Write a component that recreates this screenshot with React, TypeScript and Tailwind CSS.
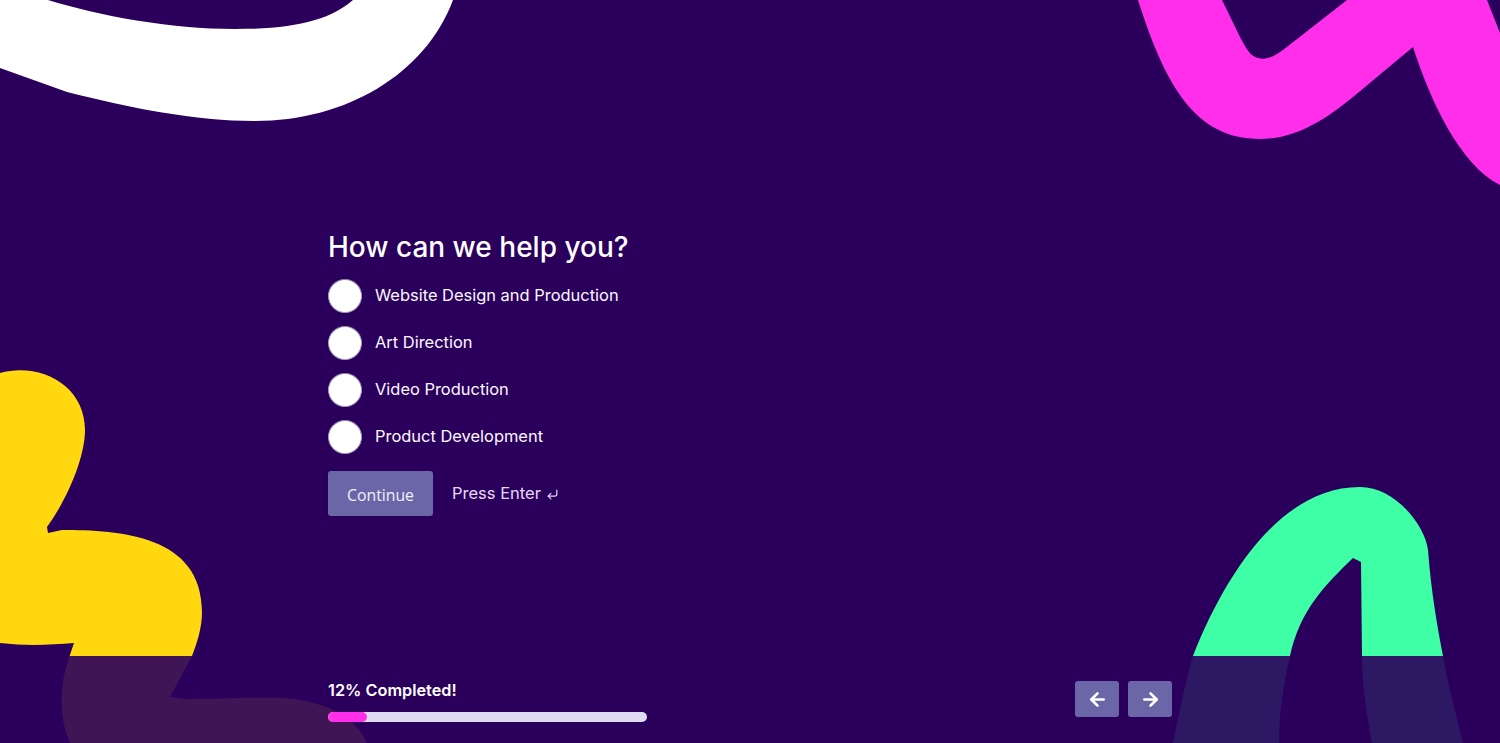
import { ArrowLeft, ArrowRight, CornerDownLeft } from "lucide-react";

const options = [
  "Website Design and Production",
  "Art Direction",
  "Video Production",
  "Product Development",
];

function Blobs() {
  return (
    <svg className="absolute inset-0" width="1500" height="743" viewBox="0 0 1500 743" fill="none">
      <path
        d="M0 68 L67 92 C130 108 195 121 255 121 C345 121 425 75 453 0 L353 0 C330 20 295 29 235 29 C170 29 100 16 48 0 L0 0 Z"
        fill="#ffffff"
      />
      <path
        d="M1138 0 C1165 85 1195 139 1260 139 C1295 139 1325 120 1353 97 L1413 47 C1430 100 1460 165 1500 185 L1500 33 L1487 0 L1347 0 L1283 50 C1272 58 1265 60 1258 58 C1250 56 1246 48 1240 37 L1222 0 Z"
        fill="#ff2eea"
      />
      <path
        d="M0 373 C40 362 85 385 85 430 C85 455 70 495 47 527 L48 533 L62 530 C120 530 202 535 202 612 C202 628 197 643 192 656 L170 697 L187 699 C220 699 255 697 283 698 C320 700 355 715 367 743 L70 743 C62 725 60 705 63 682 C65 668 70 655 74 643 C50 645 25 646 0 643 Z"
        fill="#ffd810"
      />
      <path
        d="M1173 743 C1180 710 1186 680 1193 656 C1215 600 1270 487 1360 487 C1395 487 1425 525 1428 550 C1431 590 1437 625 1443 656 C1448 685 1456 715 1463 743 L1372 743 C1367 715 1362 685 1362 656 L1361 562 L1353 558 C1325 585 1300 610 1290 656 C1283 685 1279 715 1279 743 Z"
        fill="#3effa5"
      />
    </svg>
  );
}

export default function App() {
  return (
    <div
      className="relative flex h-[743px] w-full flex-col overflow-hidden bg-[#2b005c] text-white"
      style={{ fontFamily: "Inter, sans-serif" }}
    >
      <Blobs />

      <main className="relative flex-1 pl-[328px] pt-[228px]">
        <h1 className="text-[28px] leading-[38px] font-medium">How can we help you?</h1>

        <ul className="mt-[13px] flex flex-col gap-[14px]">
          {options.map((option) => (
            <li key={option} className="flex h-[33px] items-center gap-[13px]">
              <span className="size-[34px] shrink-0 rounded-full border border-[#a49cb8] border-t-[#8f86a8] bg-white" />
              <span className="text-[16.45px] text-[#fbf8ff]">{option}</span>
            </li>
          ))}
        </ul>

        <div className="mt-[18px] flex items-center gap-[19px]">
          <button
            type="button"
            className="h-[45px] w-[105px] rounded-[3px] bg-[#6a66a8] pt-[5px] text-[15.8px] text-[#f2f0fa]"
            style={{ fontFamily: '"Open Sans", sans-serif' }}
          >
            Continue
          </button>
          <span className="flex items-center gap-[5px] text-[16.5px] text-[#e4d8f6]">
            Press Enter
            <CornerDownLeft size={13} strokeWidth={2.2} className="mt-[2px]" />
          </span>
        </div>
      </main>

      <footer className="relative flex h-[87px] items-start justify-between bg-[#2b005c]/90 px-[328px]">
        <div className="w-[319px] pt-[23px]">
          <div className="text-[16.3px] leading-[22px] font-semibold">12% Completed!</div>
          <div className="mt-[11px] h-[10px] overflow-hidden rounded-full bg-[#e0daf2]">
            <div className="h-full w-[39px] rounded-full bg-[#ff2eea]" />
          </div>
        </div>

        <div className="flex gap-[9px] pt-[25px]">
          <button type="button" className="grid h-[36px] w-[44px] place-items-center rounded-[3px] bg-[#6a66a8]">
            <ArrowLeft size={21} strokeWidth={3} />
          </button>
          <button type="button" className="grid h-[36px] w-[44px] place-items-center rounded-[3px] bg-[#6a66a8]">
            <ArrowRight size={21} strokeWidth={3} />
          </button>
        </div>
      </footer>
    </div>
  );
}
